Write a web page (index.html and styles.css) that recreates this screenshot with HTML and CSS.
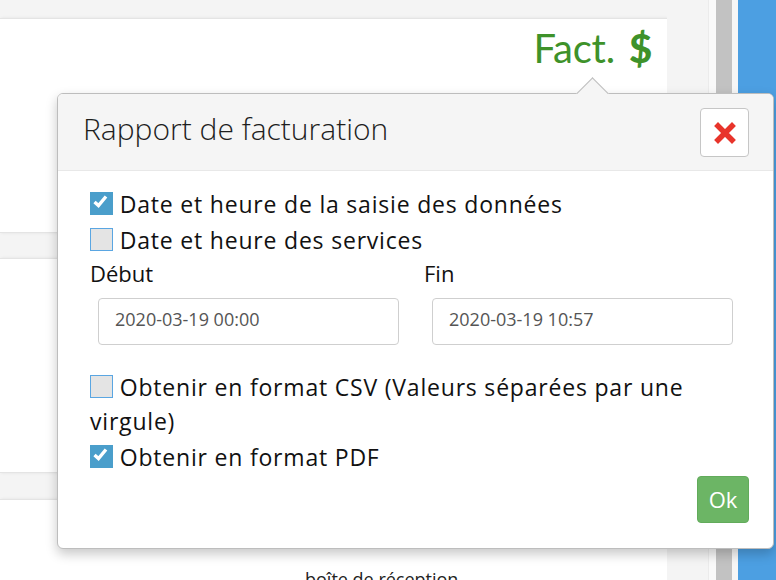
FILE: index.html
```html
<!DOCTYPE html>
<html lang="fr">
<head>
<meta charset="utf-8">
<title>Rapport de facturation</title>
<link rel="stylesheet" href="styles.css">
</head>
<body>
<div class="page">
  <main class="main">
    <div class="topband"></div>
    <section class="card card-top">
      <div class="fact">Fact.<span class="usd">$</span></div>
    </section>
    <section class="card card-mid"></section>
    <section class="card card-bottom">
      <p class="inbox">boîte de réception</p>
    </section>
  </main>
  <div class="gutter"></div>
  <div class="rail"></div>
  <div class="scrollbar"></div>
  <div class="rail2"></div>
  <aside class="bluebar"></aside>
</div>

<div class="popover">
  <div class="pop-arrow"></div>
  <div class="pop-head">
    <h3 class="pop-title">Rapport de facturation</h3>
    <button class="close-btn" type="button" aria-label="Fermer">
      <svg width="22" height="22" viewBox="0 0 22 22"><path d="M4 4 L18 18 M18 4 L4 18" stroke="#e8342b" stroke-width="5.5" stroke-linecap="square" fill="none"/></svg>
    </button>
  </div>
  <div class="pop-body">
    <label class="check-line"><span class="box on"><svg width="21" height="21" viewBox="0 0 21 21"><polyline points="3.5,9 7.5,12.5 15,3.5" fill="none" stroke="#fff" stroke-width="3.4"/></svg></span> Date et heure de la saisie des données</label>
    <label class="check-line"><span class="box"></span> Date et heure des services</label>
    <div class="dates">
      <div class="field">
        <div class="field-label">Début</div>
        <input class="date-input" type="text" value="2020-03-19 00:00">
      </div>
      <div class="field">
        <div class="field-label">Fin</div>
        <input class="date-input" type="text" value="2020-03-19 10:57">
      </div>
    </div>
    <label class="check-line csv"><span class="box"></span> Obtenir en format CSV (Valeurs séparées par une virgule)</label>
    <label class="check-line"><span class="box on"><svg width="21" height="21" viewBox="0 0 21 21"><polyline points="3.5,9 7.5,12.5 15,3.5" fill="none" stroke="#fff" stroke-width="3.4"/></svg></span> Obtenir en format PDF</label>
    <div class="actions">
      <button class="ok-btn" type="button">Ok</button>
    </div>
  </div>
</div>
</body>
</html>
```

FILE: styles.css
```css
html, body {
  margin: 0;
  padding: 0;
}

body {
  width: 776px;
  height: 580px;
  overflow: hidden;
  background: #f4f4f4;
  font-family: "Open Sans", "Liberation Sans", sans-serif;
  position: relative;
}

.page {
  display: flex;
  height: 580px;
}

.main {
  width: 667px;
  flex: none;
  display: flex;
  flex-direction: column;
}

.topband {
  height: 18px;
  flex: none;
}

.card {
  background: #fff;
  border-top: 1px solid #e4e4e4;
  border-bottom: 1px solid #e4e4e4;
  box-shadow: 1px 0 3px rgba(0, 0, 0, 0.08);
  flex: none;
}

.card-top {
  height: 213px;
  display: flex;
  justify-content: flex-end;
  align-items: flex-start;
  padding-right: 15px;
}

.card-mid {
  height: 213px;
  margin-top: 25px;
}

.card-bottom {
  margin-top: 26px;
  flex: 1;
  border-bottom: 0;
}

.fact {
  font-family: Lato, "Liberation Sans", sans-serif;
  font-size: 40px;
  line-height: 40px;
  color: #3e922a;
  margin-top: 9px;
  letter-spacing: -0.2px;
}

.usd {
  font-weight: 900;
  margin-left: 14px;
}

.inbox {
  margin: 0;
  padding: 67px 0 0 305px;
  font-size: 18px;
  color: #222;
}

.gutter {
  width: 41px;
  flex: none;
  background: #f4f4f4;
}

.rail {
  width: 7px;
  flex: none;
  background: #f9f9f9;
  border-left: 1px solid #ebebeb;
}

.scrollbar {
  width: 16px;
  flex: none;
  background: #c2c2c2;
}

.rail2 {
  width: 6px;
  flex: none;
  background: #f6f6f6;
}

.bluebar {
  flex: 1;
  background: #4c9fe2;
}

/* Popover */
.popover {
  position: absolute;
  left: 57px;
  top: 93px;
  width: 717px;
  box-sizing: border-box;
  background: #fff;
  border: 1px solid #bdbdbd;
  border-radius: 6px;
  box-shadow: 0 5px 12px rgba(0, 0, 0, 0.22);
  color: #111;
}

.pop-arrow {
  position: absolute;
  left: 523px;
  top: -12px;
  width: 23px;
  height: 23px;
  background: #f5f5f5;
  border-top: 1px solid #bdbdbd;
  border-left: 1px solid #bdbdbd;
  box-sizing: border-box;
  transform: rotate(45deg);
}

.pop-head {
  position: relative;
  display: flex;
  justify-content: space-between;
  align-items: flex-start;
  padding: 14px 24px 13px 25px;
  background: #f5f5f5;
  border-bottom: 1px solid #e8e8e8;
  border-radius: 5px 5px 0 0;
}

.pop-title {
  margin: 1px 0 0;
  font-size: 30px;
  font-weight: 300;
  line-height: 40px;
  color: #1e1e1e;
}

.close-btn {
  width: 49px;
  height: 49px;
  box-sizing: border-box;
  border: 1px solid #c6c6c6;
  border-radius: 4px;
  background: #fff;
  padding: 0;
  display: flex;
  align-items: center;
  justify-content: center;
}

.pop-body {
  padding: 16px 24px 25px 32px;
}

.check-line {
  display: block;
  font-size: 23px;
  line-height: 34px;
  letter-spacing: 0.8px;
  margin-bottom: 2px;
  color: #111;
}

.box {
  display: inline-block;
  width: 23px;
  height: 23px;
  box-sizing: border-box;
  vertical-align: -2px;
  background: #e4e4e4;
  border: 1.5px solid #5aa6e2;
}

.box.on {
  background: #4a9ecb;
  border: 1px solid #4a9ecb;
}

.box svg {
  display: block;
}

.dates {
  display: grid;
  grid-template-columns: 334px 1fr;
  margin-top: -3px;
}

.field-label {
  font-size: 22px;
  line-height: 34px;
  color: #111;
}

.date-input {
  display: block;
  margin: 8px 0 0 8px;
  width: 301px;
  height: 47px;
  box-sizing: border-box;
  border: 1px solid #cfcfcf;
  border-radius: 4px;
  padding: 2px 16px 8px;
  font-family: "Open Sans", "Liberation Sans", sans-serif;
  font-size: 18px;
  color: #555;
  background: #fff;
  outline: none;
}

.csv {
  margin-top: 25px;
}

.actions {
  display: flex;
  justify-content: flex-end;
  margin-top: 1px;
}

.ok-btn {
  width: 52px;
  height: 47px;
  box-sizing: border-box;
  background: #6cb565;
  border: 1px solid #62ab5b;
  border-radius: 4px;
  color: #fff;
  font-family: "Open Sans", "Liberation Sans", sans-serif;
  font-size: 22px;
  line-height: 45px;
  padding: 0;
}
```
